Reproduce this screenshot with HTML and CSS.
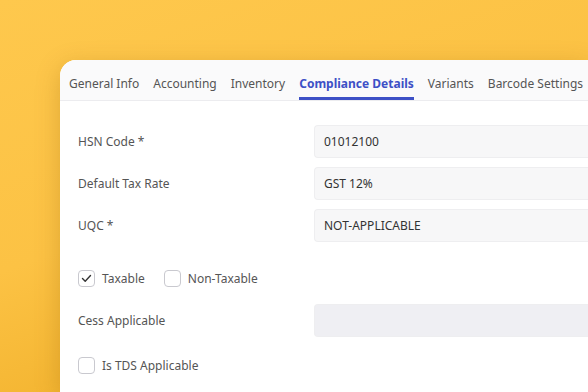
FILE: index.html
```html
<!DOCTYPE html>
<html lang="en">
<head>
    <meta charset="UTF-8">
    <meta name="viewport" content="width=device-width, initial-scale=1.0">
    <title>Item - Compliance Details</title>
    <link rel="stylesheet" href="styles.css">
</head>
<body>
    <div class="card">
        <nav class="tabs">
            <span class="tab">General Info</span>
            <span class="tab">Accounting</span>
            <span class="tab">Inventory</span>
            <span class="tab active">Compliance Details</span>
            <span class="tab">Variants</span>
            <span class="tab">Barcode Settings</span>
        </nav>

        <div class="form">
            <div class="row">
                <label>HSN Code *</label>
                <div class="field">01012100</div>
            </div>
            <div class="row">
                <label>Default Tax Rate</label>
                <div class="field">GST 12%</div>
            </div>
            <div class="row">
                <label>UQC *</label>
                <div class="field">NOT-APPLICABLE</div>
            </div>

            <div class="checks first">
                <span class="check">
                    <span class="box checked">
                        <svg width="11" height="9" viewBox="0 0 11 9"><path d="M1.5 4.6 L4.2 7.2 L9.5 1.6" fill="none" stroke="#333" stroke-width="1.4" stroke-linecap="round" stroke-linejoin="round"/></svg>
                    </span>
                    Taxable
                </span>
                <span class="check">
                    <span class="box"></span>
                    Non-Taxable
                </span>
            </div>

            <div class="row">
                <label>Cess Applicable</label>
                <div class="field disabled"></div>
            </div>

            <div class="checks last">
                <span class="check">
                    <span class="box"></span>
                    Is TDS Applicable
                </span>
            </div>
        </div>
    </div>
</body>
</html>
```

FILE: styles.css
```css
:root {
    --accent: #3d50c6;
    --text: #555;
    --field: #f7f7f8;
}

* {
    margin: 0;
    padding: 0;
    box-sizing: border-box;
}

body {
    font-family: 'Noto Sans', 'Open Sans', sans-serif;
    font-size: 12px;
    color: var(--text);
    background: linear-gradient(160deg, #fec84d 0%, #fcc244 45%, #e9a51a 100%);
    height: 392px;
    overflow: hidden;
    padding: 60px 0 0 60px;
}

.card {
    width: 528px;
    height: 332px;
    background: white;
    border-radius: 16px 0 0 0;
    box-shadow: 0 6px 24px rgba(140, 90, 0, 0.28);
    overflow: hidden;
}

.tabs {
    display: flex;
    gap: 14px;
    height: 41px;
    padding: 0 9px;
    background: #fafafb;
    border-bottom: 1px solid #ececef;
}

.tab {
    display: flex;
    align-items: center;
    white-space: nowrap;
    color: #555;
    border-bottom: 3px solid transparent;
    padding-top: 9px;
}

.tab.active {
    color: var(--accent);
    font-weight: 700;
    border-bottom-color: var(--accent);
}

.form {
    display: flex;
    flex-direction: column;
    gap: 9px;
    padding: 24px 0 0 18px;
}

.row {
    display: grid;
    grid-template-columns: 236px 1fr;
    align-items: center;
}

.field {
    height: 33px;
    display: flex;
    align-items: center;
    padding: 0 9px;
    background: var(--field);
    border: 1px solid #eeeef0;
    border-right: none;
    border-radius: 4px 0 0 4px;
    color: #333;
}

.field.disabled {
    background: #efeff3;
}

.checks {
    display: flex;
    gap: 19px;
    height: 34px;
    align-items: center;
}

.checks.first {
    margin-top: 10px;
}

.checks.last {
    margin-top: 2px;
}

.check {
    display: flex;
    align-items: center;
    gap: 7px;
}

.box {
    width: 17px;
    height: 17px;
    border: 1px solid #c9c9cf;
    border-radius: 4px;
    background: white;
    display: flex;
    align-items: center;
    justify-content: center;
}
```
